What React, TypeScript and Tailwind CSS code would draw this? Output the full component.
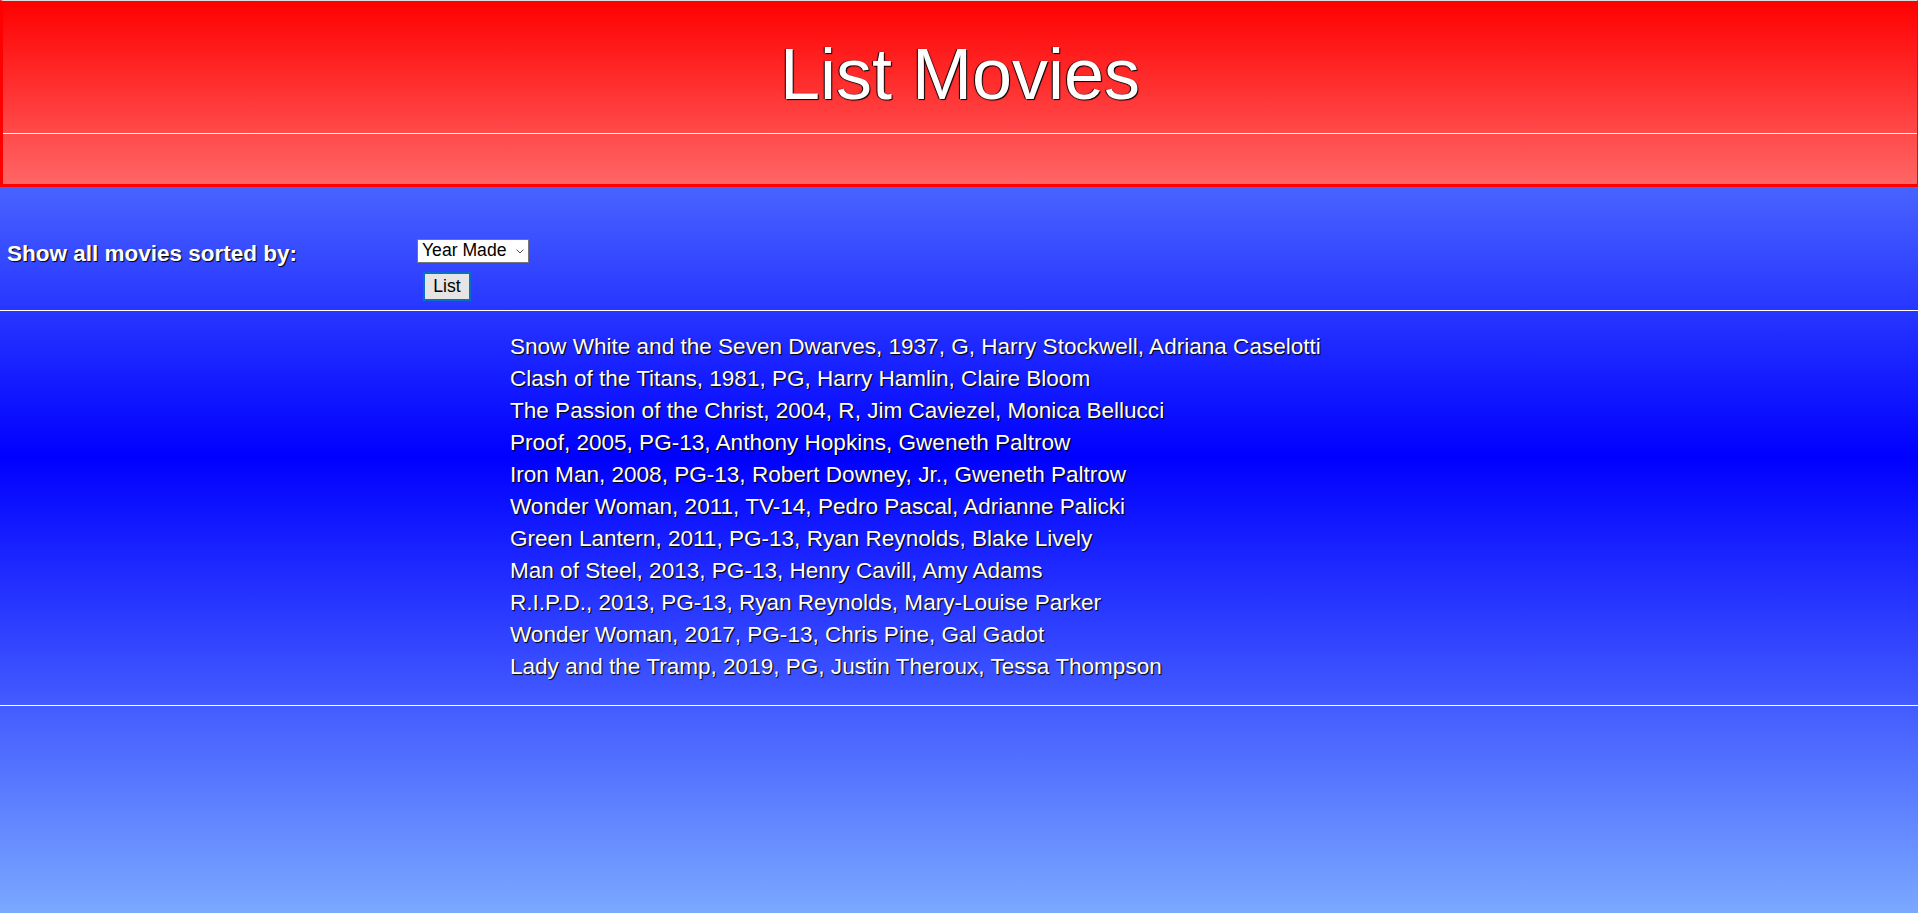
const movies = [
  'Snow White and the Seven Dwarves, 1937, G, Harry Stockwell, Adriana Caselotti',
  'Clash of the Titans, 1981, PG, Harry Hamlin, Claire Bloom',
  'The Passion of the Christ, 2004, R, Jim Caviezel, Monica Bellucci',
  'Proof, 2005, PG-13, Anthony Hopkins, Gweneth Paltrow',
  'Iron Man, 2008, PG-13, Robert Downey, Jr., Gweneth Paltrow',
  'Wonder Woman, 2011, TV-14, Pedro Pascal, Adrianne Palicki',
  'Green Lantern, 2011, PG-13, Ryan Reynolds, Blake Lively',
  'Man of Steel, 2013, PG-13, Henry Cavill, Amy Adams',
  'R.I.P.D., 2013, PG-13, Ryan Reynolds, Mary-Louise Parker',
  'Wonder Woman, 2017, PG-13, Chris Pine, Gal Gadot',
  'Lady and the Tramp, 2019, PG, Justin Theroux, Tessa Thompson',
];

export default function App() {
  return (
    <div className="min-h-[913px] bg-[linear-gradient(#7ba8ff,#0000ff_50%,#7ba8ff)] font-['Liberation_Sans',Arial,sans-serif]">
      <header className="border-t border-t-[#dcdcdc] border-l-[3px] border-r border-b-[3px] border-l-[#ff0000] border-r-[#ff0000] border-b-[#ff0000] bg-[linear-gradient(#ff0000,#ff6666)]">
        <h1 className="pt-[37px] pb-[23px] text-center text-[72px] leading-none font-normal text-white border-b border-white [text-shadow:1px_1px_1px_#000,-1px_0_1px_#000]">
          List Movies
        </h1>
        <div className="h-[50px]" />
      </header>

      <form className="flex pt-[52px] pb-[9px]" onSubmit={(e) => e.preventDefault()}>
        <div className="w-[417px] pl-[7px]">
          <label className="block mt-[2px] text-[22.5px] leading-[25px] font-bold text-white [text-shadow:1px_1px_1px_#000]">
            Show all movies sorted by:
          </label>
        </div>
        <div className="flex flex-col items-start">
          <div className="relative">
            <select
              defaultValue="year"
              className="appearance-none w-[112px] h-[24px] pl-[4px] border border-[#767676] bg-white text-[17.6px] leading-none text-black outline-none"
            >
              <option value="year">Year Made</option>
              <option value="title">Title</option>
              <option value="rating">Rating</option>
            </select>
            <svg
              className="absolute right-[5px] top-[10px] pointer-events-none"
              width="8"
              height="5"
              viewBox="0 0 8 5"
              fill="none"
            >
              <path d="M0.5 0.5L4 4L7.5 0.5" stroke="#555" strokeWidth="1" />
            </svg>
          </div>
          <button
            type="submit"
            className="mt-[9px] ml-[6px] w-[48px] h-[29px] border-2 border-[#0a6fc4] bg-[#e5e5e5] text-[17.6px] leading-none text-black"
          >
            List
          </button>
        </div>
      </form>

      <div className="border-t border-white" />

      <ul className="pl-[510px] pt-[20px] pb-[22px] text-[22.55px] leading-[32px] text-white [text-shadow:1px_1px_1px_#000]">
        {movies.map((movie, index) => (
          <li key={index}>{movie}</li>
        ))}
      </ul>

      <div className="border-t border-white" />
    </div>
  );
}
